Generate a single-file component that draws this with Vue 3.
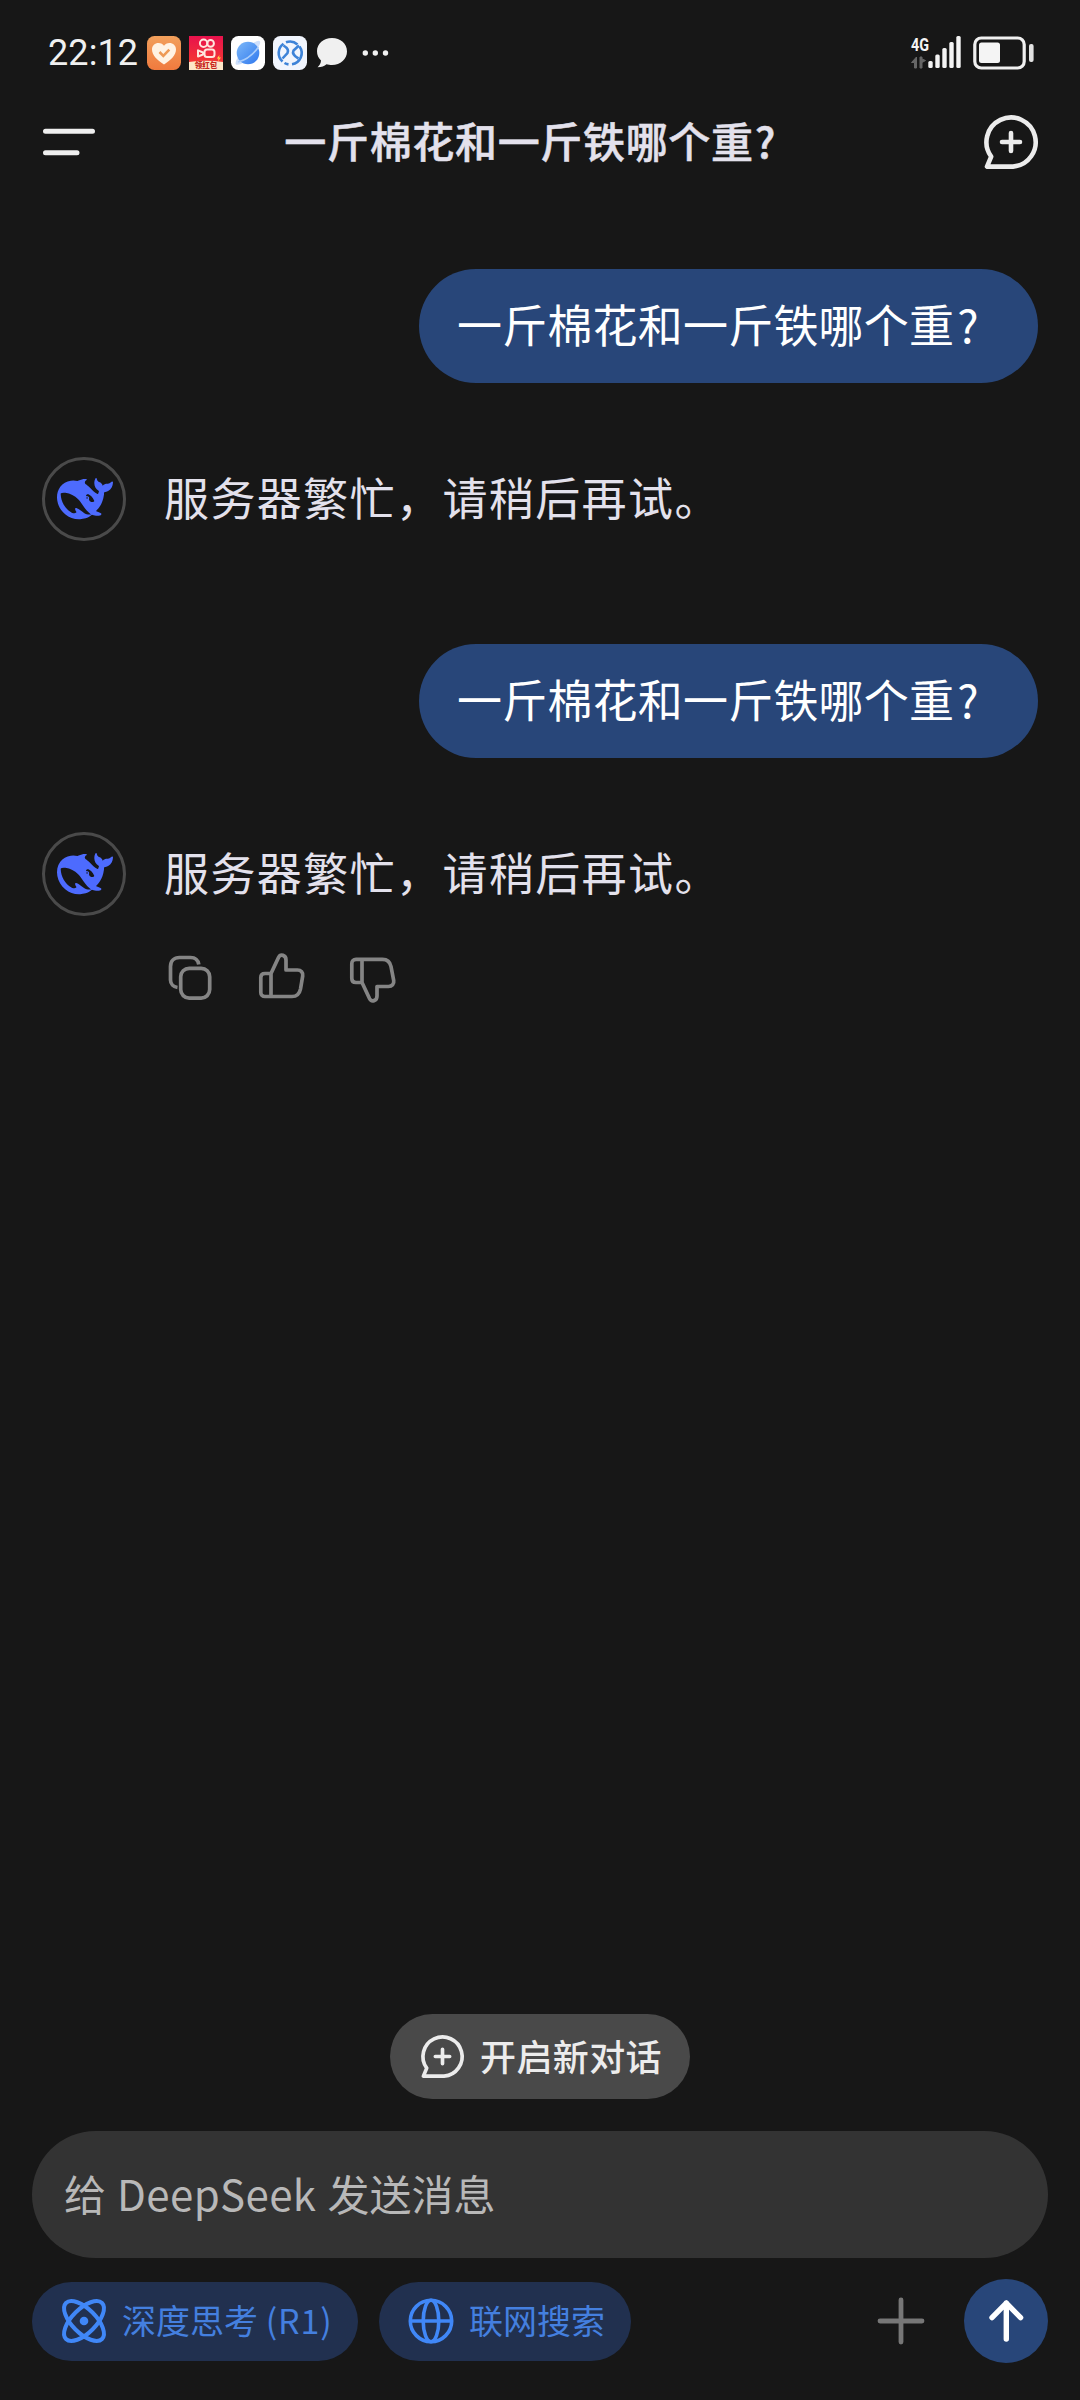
<script setup>
import { h } from 'vue'

const question = '一斤棉花和一斤铁哪个重'
const answer = '服务器繁忙，请稍后再试。'
const turns = [
  { id: 1, actions: false },
  { id: 2, actions: true },
]
const bars = [
  { x: 0, h: 7 },
  { x: 7, h: 13.5 },
  { x: 14, h: 20 },
  { x: 21, h: 26 },
  { x: 28, h: 32 },
]

const whale =
  'M23.748 4.482c-.254-.124-.364.113-.512.234-.051.039-.094.09-.137.136-.372.397-.806.657-1.373.626-.829-.046-1.537.214-2.163.848-.133-.782-.575-1.248-1.247-1.548-.352-.156-.708-.311-.955-.65-.172-.241-.219-.51-.305-.774-.055-.16-.11-.323-.293-.35-.2-.031-.278.136-.356.276-.313.572-.434 1.202-.422 1.84.027 1.436.633 2.58 1.838 3.393.137.093.172.187.129.323-.082.28-.18.552-.266.833-.055.179-.137.217-.329.14a5.526 5.526 0 01-1.736-1.18c-.857-.828-1.631-1.742-2.597-2.458a11.365 11.365 0 00-.689-.471c-.985-.957.13-1.743.388-1.836.27-.098.093-.432-.779-.428-.872.004-1.67.295-2.687.684a3.055 3.055 0 01-.465.137 9.597 9.597 0 00-2.883-.102c-1.885.21-3.39 1.102-4.497 2.623C.082 8.606-.231 10.684.152 12.85c.403 2.284 1.569 4.175 3.36 5.653 1.858 1.533 3.997 2.284 6.438 2.14 1.482-.085 3.133-.284 4.994-1.86.47.234.962.327 1.78.397.63.059 1.236-.03 1.705-.128.735-.156.684-.837.419-.961-2.155-1.004-1.682-.595-2.113-.926 1.096-1.296 2.746-2.642 3.392-7.003.05-.347.007-.565 0-.845-.004-.17.035-.237.23-.256a4.173 4.173 0 001.545-.475c1.396-.763 1.96-2.015 2.093-3.517.02-.23-.004-.467-.247-.588zM11.581 18c-2.089-1.642-3.102-2.183-3.52-2.16-.392.024-.321.471-.235.763.09.288.207.486.371.739.114.167.192.416-.113.603-.673.416-1.842-.14-1.897-.167-1.361-.802-2.5-1.86-3.301-3.307-.774-1.393-1.224-2.887-1.298-4.482-.02-.386.093-.522.477-.592a4.696 4.696 0 011.529-.039c2.132.312 3.946 1.265 5.468 2.774.868.86 1.525 1.887 2.202 2.891.72 1.066 1.494 2.082 2.48 2.914.348.292.625.514.891.677-.802.09-2.14.11-3.054-.614zm1-6.44a.306.306 0 01.415-.287.302.302 0 01.2.288.306.306 0 01-.31.307.303.303 0 01-.304-.308zm3.11 1.596c-.2.081-.399.151-.59.16a1.245 1.245 0 01-.798-.254c-.274-.23-.47-.358-.552-.758a1.73 1.73 0 01.016-.588c.07-.327-.008-.537-.239-.727-.187-.156-.426-.199-.688-.199a.559.559 0 01-.254-.078c-.11-.054-.2-.19-.114-.358.028-.054.16-.186.192-.21.356-.202.767-.136 1.146.016.352.144.618.408 1.001.782.391.451.462.576.685.914.176.265.336.537.445.848.067.195-.019.354-.25.452z'

const NewChatIcon = (props) =>
  h(
    'svg',
    {
      viewBox: '0 0 54 54',
      width: props.size,
      height: props.size,
      fill: 'none',
      stroke: '#ececec',
      'stroke-width': props.stroke,
      'stroke-linecap': 'round',
      'stroke-linejoin': 'round',
    },
    [
      h('path', { d: 'M29 51.6A24.6 24.6 0 1 0 7.2 41.6L3 51.6Z' }),
      h('path', { d: 'M27 18V36M18 27H36' }),
    ],
  )
NewChatIcon.props = ['size', 'stroke']
</script>

<template>
  <div class="screen">
    <div class="status">
      <span class="time">22:12</span>
      <div class="notices">
        <svg width="34" height="34" viewBox="0 0 34 34">
          <defs>
            <linearGradient id="orange" x1="0" y1="0" x2="0" y2="1">
              <stop offset="0" stop-color="#f2a05c" />
              <stop offset="1" stop-color="#f07a3e" />
            </linearGradient>
          </defs>
          <rect width="34" height="34" rx="7.5" fill="url(#orange)" />
          <path d="M17 28.500C10 24 5 19 5 13.500C5 9.500 8 7 11.500 7C14 7 16 8.200 17 9.800C18 8.200 20 7 22.500 7C26 7 29 9.500 29 13.500C29 19 24 24 17 28.500Z" fill="#fff3e4" />
          <path d="M12.500 16L16.300 19.800L22.300 13.600" fill="none" stroke="#ee9a55" stroke-width="2.600" />
        </svg>
        <svg width="34" height="34" viewBox="0 0 34 34">
          <defs>
            <linearGradient id="red" x1="0" y1="0" x2="0" y2="1">
              <stop offset="0" stop-color="#e8124d" />
              <stop offset="1" stop-color="#f8402c" />
            </linearGradient>
          </defs>
          <rect width="34" height="34" fill="url(#red)" />
          <g fill="none" stroke="#ffe6de" stroke-width="2">
            <circle cx="14.600" cy="7.200" r="3.700" />
            <circle cx="21.600" cy="7.400" r="3.300" />
            <rect x="15.500" y="13.500" width="10" height="7.600" rx="2.500" />
            <path d="M9 14.300L14 16.500V18.500L9 20.500Z" stroke-linejoin="round" />
          </g>
          <path d="M30.500 19L27.800 22.600H29.600L28.800 25.500L32 21.600H30Z" fill="#ffd84a" />
          <path d="M0 26Q17 23.500 34 26V34H0Z" fill="#fde6c8" />
          <text x="17" y="32.300" text-anchor="middle" class="packet">领红包</text>
        </svg>
        <svg width="34" height="34" viewBox="0 0 34 34">
          <defs>
            <linearGradient id="planet" x1="0" y1="0" x2="1" y2="1">
              <stop offset="0" stop-color="#7db8f8" />
              <stop offset="1" stop-color="#2f78ee" />
            </linearGradient>
          </defs>
          <rect width="34" height="34" rx="7.500" fill="#fff" />
          <path d="M22 7Q28 3.500 29 5.500Q30 8 26 13ZM7 21Q3.500 27 5 28.500Q7.500 29.500 13 26.500Z" fill="#cfe0fb" />
          <circle cx="17" cy="17" r="11.300" fill="url(#planet)" />
          <path d="M7 26Q19 23 27.500 11" fill="none" stroke="#a9cdfb" stroke-width="1.600" />
        </svg>
        <svg width="34" height="34" viewBox="0 0 34 34">
          <rect width="34" height="34" rx="7.500" fill="#f1f5fd" />
          <g fill="none" stroke="#3d83d8" stroke-width="2.600">
            <path d="M10.500 7.800A11.300 11.300 0 0 0 9.500 25.500M13 6.300A11.300 11.300 0 0 1 24.500 8.500M26.500 10.500A11.300 11.300 0 0 1 19 28.300M11.500 27A11.300 11.300 0 0 0 15.500 28.400" />
            <path d="M10.500 9.500Q16.500 13 14.500 17L9.500 22.500M26 9.500L20.500 14.500Q18.500 18.500 25.500 22.500" />
          </g>
        </svg>
        <svg class="chat" width="32" height="32" viewBox="0 0 32 32">
          <path d="M16 1C7.500 1 1 6.500 1 14.300C1 18.300 2.500 21 5 23.600C4.900 26.500 3.500 28.500 1.600 30.200C5.500 30.200 8.500 29 10.500 27.200C12 27.600 14 27.900 16 27.900C24.500 27.900 31 22 31 14.400C31 6.500 24.500 1 16 1Z" fill="#f0f0f0" />
        </svg>
        <svg class="dots" width="28" height="6" viewBox="0 0 28 6" fill="#f0f0f0">
          <circle cx="3.300" cy="3" r="2.700" /><circle cx="13.300" cy="3" r="2.700" /><circle cx="23.500" cy="3" r="2.700" />
        </svg>
      </div>
      <svg class="signal" width="52" height="34" viewBox="0 0 52 34">
        <text x="0" y="15" textLength="18" lengthAdjust="spacingAndGlyphs" class="net">4G</text>
        <path d="M5.500 21V32H3.500V26.500H.5Z M9 21V32H11V26.500L14.500 24.500 11 23V21Z" fill="#666" stroke="#666" />
        <rect v-for="b in bars" :key="b.x" :x="17.300 + b.x" :y="32 - b.h" width="4.400" :height="b.h" rx="1.500" fill="#f4f4f4" />
      </svg>
      <svg class="battery" width="62" height="34" viewBox="0 0 62 34">
        <rect x="1.800" y="2" width="49.400" height="30" rx="6.500" fill="none" stroke="#f0f0f0" stroke-width="3.200" />
        <rect x="6" y="6.500" width="21" height="20.500" rx="2.500" fill="#f4f4f4" />
        <rect x="56" y="8" width="4.600" height="18" rx="2" fill="#e2e2e2" />
      </svg>
    </div>

    <header class="header">
      <svg width="54" height="28" viewBox="0 0 54 28" stroke="#efefef" stroke-width="5" stroke-linecap="round">
        <path d="M3.500 3.300H50.500M3.500 24.700H35" />
      </svg>
      <h1 class="title">{{ question }}<span class="mark">?</span></h1>
      <NewChatIcon size="54" stroke="4.6" />
    </header>

    <main class="thread">
      <section v-for="t in turns" :key="t.id" class="turn">
        <div class="bubble">{{ question }}<span class="mark">?</span></div>
        <div class="reply">
          <div class="avatar">
            <svg width="56" height="56" viewBox="0 0 24 24" fill="#4d6bfe"><path :d="whale" /></svg>
          </div>
          <p class="answer">{{ answer }}</p>
        </div>
        <div v-if="t.actions" class="actions">
          <svg width="48" height="52" viewBox="0 0 48 52">
            <path d="M10.500 35.500C6.500 35 3.500 32 3.500 28V14.500C3.500 9 7 5.500 12.500 5.500H23.500C28 5.500 31 8 31.800 12.500" />
            <rect x="13.700" y="16.300" width="29" height="29.800" rx="8.500" />
          </svg>
          <svg width="48" height="52" viewBox="0 0 48 52">
            <path d="M13 21.500L20.500 5.500C22.500 1.500 28 3 28 8V18H39.500C43 18 45.300 20.500 44.700 24L42.500 37C41.500 42 38.500 44.500 34 44.500H7C4.500 44.500 2.800 43 2.800 40.500V25.500C2.800 23 4.500 21.500 7 21.500ZM13 21.500V44.500" />
          </svg>
          <svg width="48" height="52" viewBox="0 0 48 52">
            <path d="M13 30.500L20.500 46.500C22.500 50.500 28 49 28 44V34.500H39.500C43 34.500 45.300 32 44.700 28.500L42 14.500C41 9.500 38 7.300 33.500 7.300H7C4.500 7.300 2.800 9 2.800 11.500V26.500C2.800 29 4.500 30.500 7 30.500ZM13 7.300V30.500" />
          </svg>
        </div>
      </section>
    </main>

    <footer class="footer">
      <button class="fresh">
        <NewChatIcon size="43" stroke="4.600" />
        <span>开启新对话</span>
      </button>
      <div class="input"><span>给</span><span class="latin">DeepSeek</span><span>发送消息</span></div>
      <div class="tools">
        <div class="chip think">
          <svg width="46" height="46" viewBox="0 0 46 46" fill="none" stroke="#4087f7" stroke-width="4">
            <ellipse cx="23" cy="23" rx="25.500" ry="12" transform="rotate(45 23 23)" />
            <ellipse cx="23" cy="23" rx="25.500" ry="12" transform="rotate(-45 23 23)" />
            <circle cx="23" cy="23" r="4.300" fill="#4087f7" stroke="none" />
          </svg>
          <span>深度思考 <span class="r1">(R1)</span></span>
        </div>
        <div class="chip web">
          <svg width="46" height="46" viewBox="0 0 46 46" fill="none" stroke="#4087f7" stroke-width="3.600">
            <circle cx="23" cy="23" r="20.700" />
            <ellipse cx="23" cy="23" rx="7.800" ry="20.700" />
            <path d="M2.300 23H43.700" />
          </svg>
          <span>联网搜索</span>
        </div>
        <svg class="plus" width="48" height="48" viewBox="0 0 48 48" stroke="#777" stroke-width="4.800" stroke-linecap="round">
          <path d="M24 3V45M3 24H45" />
        </svg>
        <div class="send">
          <svg width="84" height="84" viewBox="0 0 84 84" fill="none" stroke="#fff" stroke-width="5.400" stroke-linecap="round" stroke-linejoin="round">
            <path d="M42.300 60V24M28 38.600L42.300 24.200L56.600 38.600" />
          </svg>
        </div>
      </div>
    </footer>
  </div>
</template>

<style>
body {
  background: #171717;
}
</style>

<style scoped>
.screen {
  width: 1080px;
  height: 2400px;
  box-sizing: border-box;
  display: flex;
  flex-direction: column;
  background: #171717;
  color: #e3e1ec;
  font-family: "Noto Sans CJK SC", sans-serif;
  overflow: hidden;
}
svg {
  display: block;
  flex: none;
  overflow: visible;
}
.status {
  height: 34px;
  padding: 36px 45px 0 47px;
  display: flex;
  align-items: center;
}
.time {
  width: 99px;
  padding-left: 1px;
  font: 400 36px/34px Roboto, sans-serif;
  letter-spacing: 0.1px;
  color: #f0f0f0;
  white-space: nowrap;
}
.notices {
  display: flex;
  align-items: center;
  gap: 8px;
  flex: 1;
}
.chat {
  margin-left: 1px;
}
.dots {
  margin-left: 6px;
}
.packet {
  font: 900 7.5px "Noto Sans CJK SC", sans-serif;
  fill: #c8281e;
}
.net {
  font: 700 19px Roboto, sans-serif;
  fill: #f4f4f4;
}
.battery {
  margin-left: 10px;
}
.header {
  height: 144px;
  padding: 0 42px;
  display: flex;
  align-items: center;
  justify-content: space-between;
}
.title {
  margin: 0;
  padding-bottom: 4px;
  font-size: 42px;
  font-weight: 500;
  line-height: 60px;
  letter-spacing: 0.67px;
  -webkit-text-stroke: 0.5px #e3e1ec;
  white-space: nowrap;
}
.mark {
  display: inline-block;
  box-sizing: border-box;
  width: 1em;
  padding-left: 1px;
}
.thread {
  flex: 1;
  padding: 55px 42px 0;
}
.turn {
  display: flex;
  flex-direction: column;
  margin-bottom: 103px;
}
.bubble {
  align-self: flex-end;
  height: 114px;
  width: 619px;
  box-sizing: border-box;
  padding-left: 38px;
  border-radius: 57px;
  background: #284679;
  color: #fff;
  font-size: 45px;
  line-height: 110px;
  letter-spacing: 0.2px;
  white-space: nowrap;
}
.bubble .mark {
  padding-left: 3px;
}
.reply {
  display: flex;
  align-items: center;
  margin-top: 74px;
  gap: 38px;
}
.avatar {
  width: 84px;
  height: 84px;
  box-sizing: border-box;
  border: 3px solid #4a4a4a;
  border-radius: 50%;
  display: flex;
  align-items: center;
  justify-content: center;
}
.avatar svg {
  margin-left: 2px;
}
.answer {
  margin: 0;
  height: 84px;
  font-size: 45px;
  line-height: 79px;
  letter-spacing: 1.4px;
}
.actions {
  display: flex;
  gap: 43px;
  margin: 36px 0 0 125px;
}
.actions svg {
  fill: none;
  stroke: #858585;
  stroke-width: 3.7;
  stroke-linejoin: round;
}
.footer {
  height: 386px;
  padding: 0 32px;
  display: flex;
  flex-direction: column;
}
.fresh {
  align-self: center;
  width: 300px;
  height: 85px;
  border: 0;
  border-radius: 43px;
  background: #494949;
  color: #ececec;
  display: flex;
  align-items: center;
  gap: 16px;
  padding: 0 0 0 31px;
  font: 500 36px/80px "Noto Sans CJK SC", sans-serif;
  letter-spacing: 0.4px;
  white-space: nowrap;
}
.fresh span {
  padding-bottom: 4px;
}
.input {
  height: 127px;
  box-sizing: border-box;
  margin-top: 32px;
  border-radius: 64px;
  background: #333;
  color: #b8b8b8;
  padding: 0 0 4px 32px;
  display: flex;
  align-items: center;
  gap: 11px;
  font-size: 42px;
  font-weight: 400;
}
.latin {
  letter-spacing: 0.4px;
}
.tools {
  display: flex;
  align-items: center;
  height: 84px;
  margin-top: 21px;
}
.chip {
  height: 79px;
  border-radius: 40px;
  background: #21304f;
  color: #447fdf;
  display: flex;
  align-items: center;
  box-sizing: border-box;
  padding-left: 29px;
  gap: 15px;
  font-size: 34px;
  white-space: nowrap;
}
.chip > span {
  padding-bottom: 3px;
}
.r1 {
  letter-spacing: 0.9px;
}
.chip.think {
  width: 326px;
}
.chip.web {
  width: 252px;
  margin-left: 21px;
}
.plus {
  margin-left: auto;
}
.send {
  width: 84px;
  height: 84px;
  margin-left: 39px;
  border-radius: 50%;
  background: #284679;
}
</style>
